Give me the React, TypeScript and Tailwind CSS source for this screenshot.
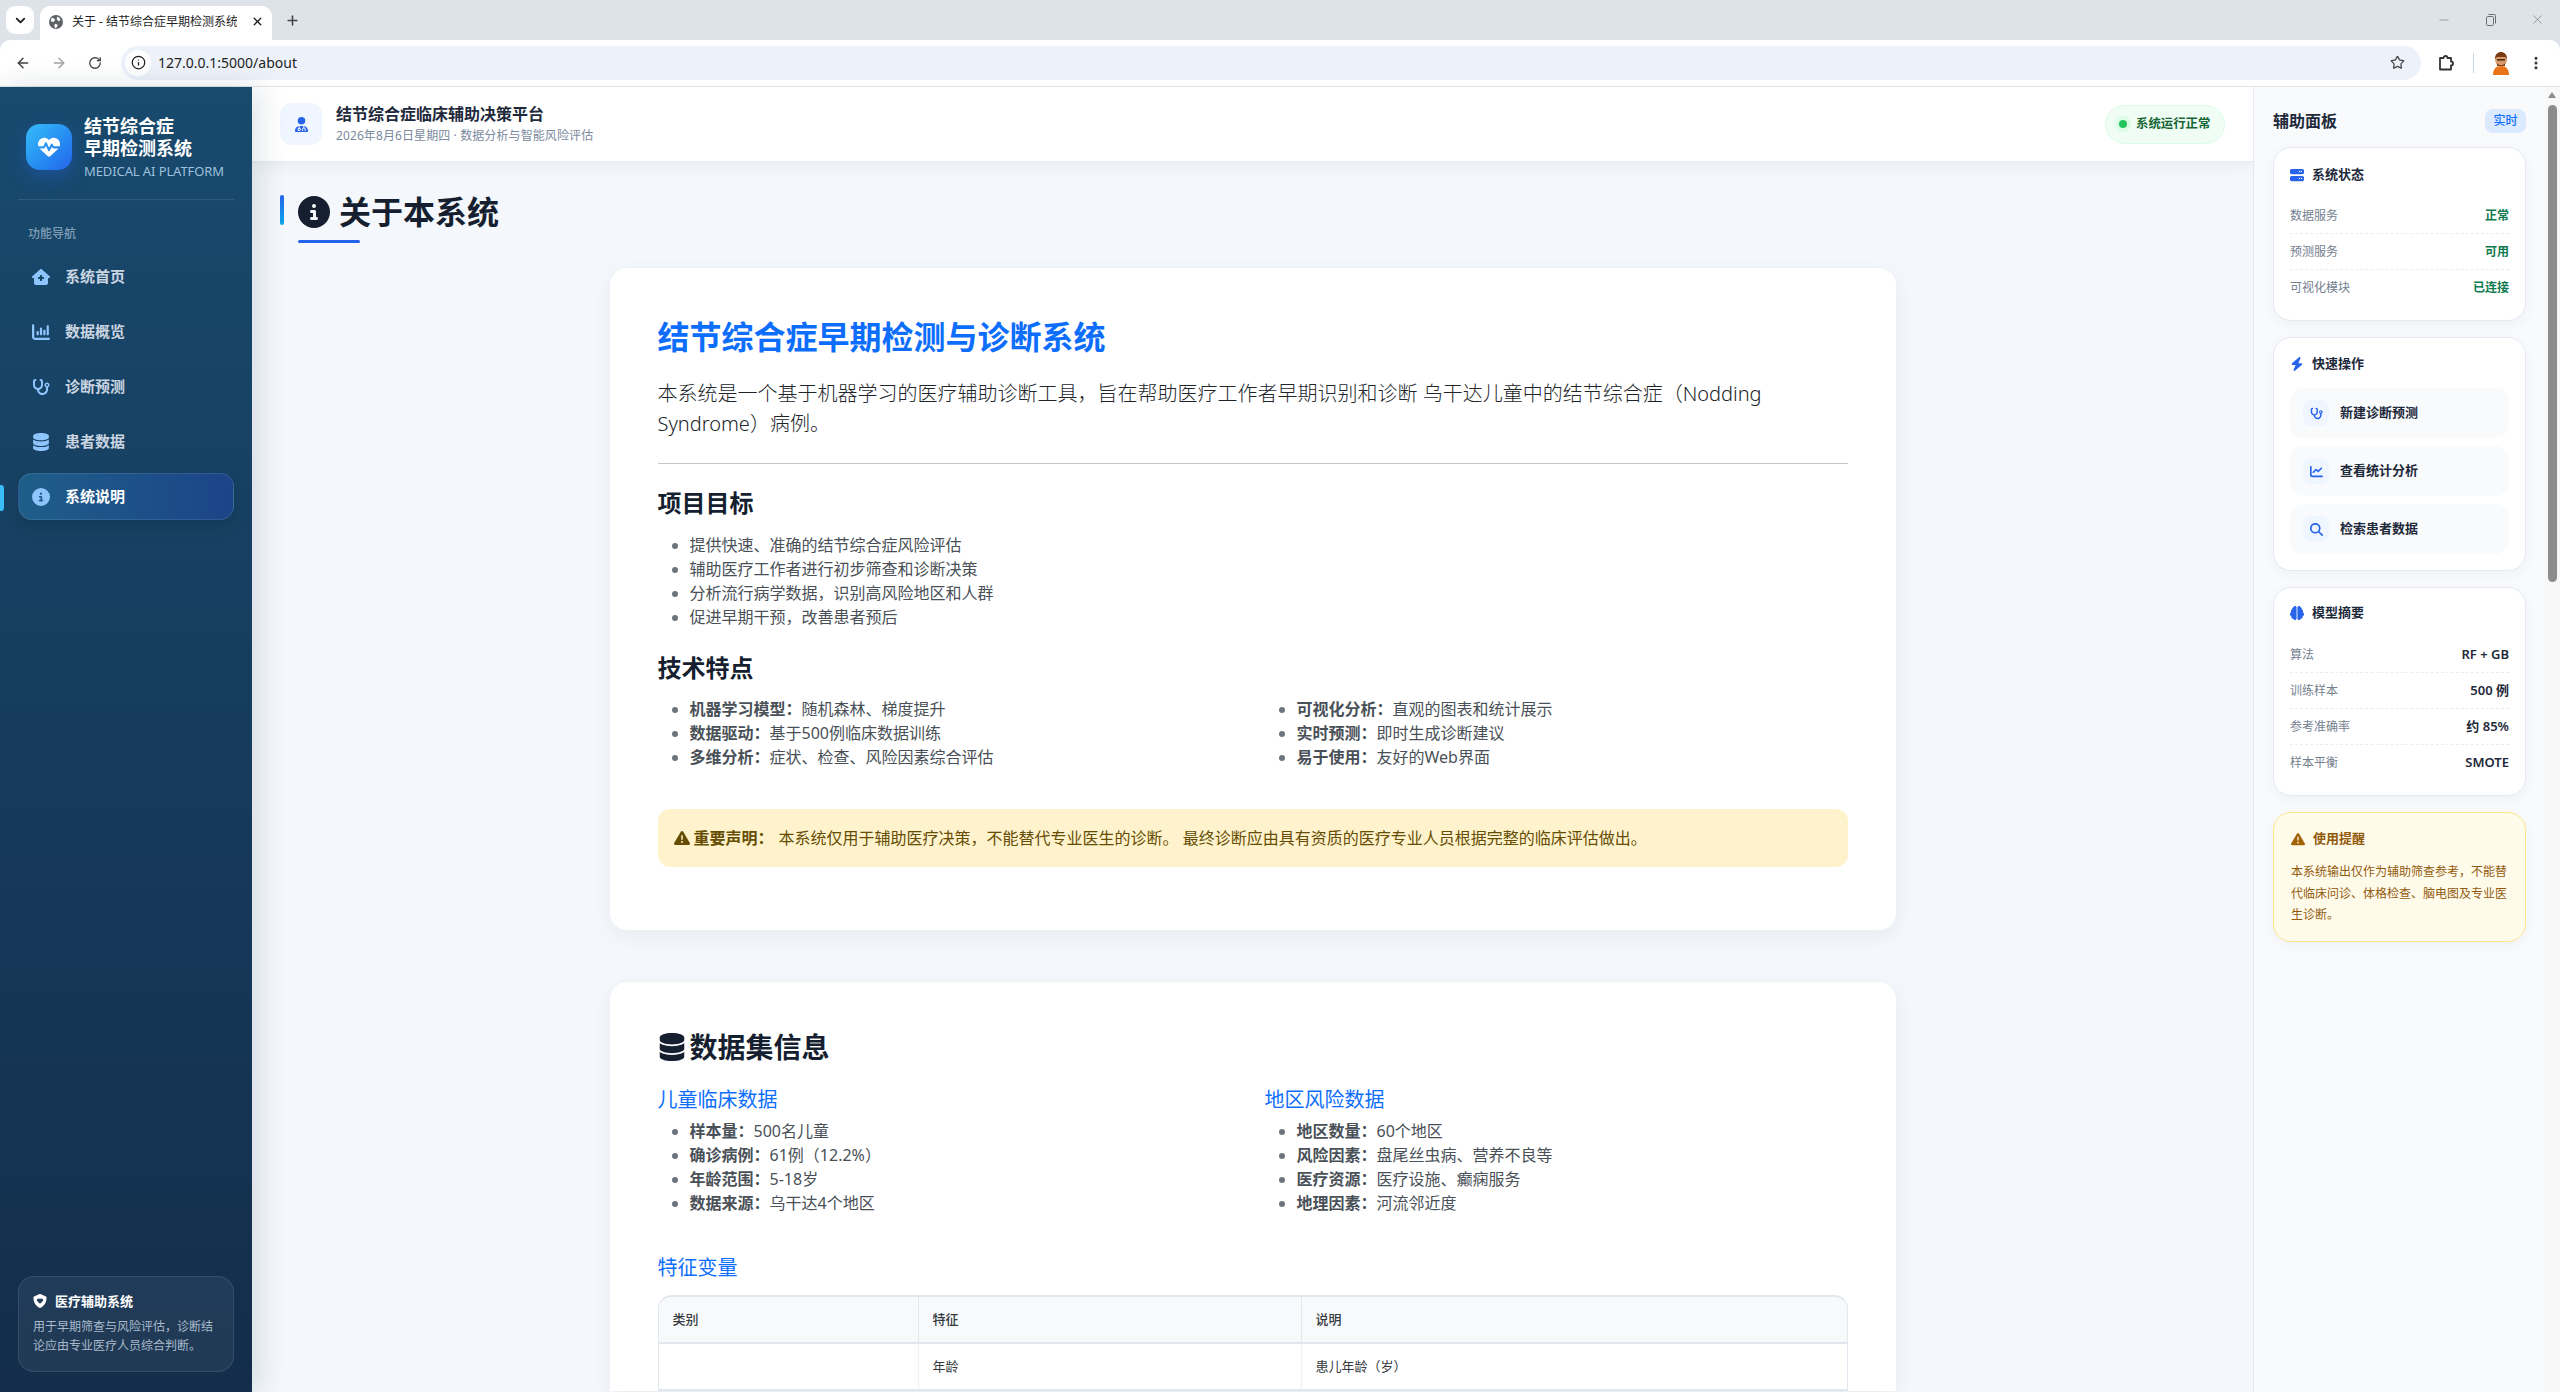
import type { ReactNode } from "react";
import {
  FaBolt,
  FaBrain,
  FaChartColumn,
  FaChartLine,
  FaCircleInfo,
  FaDatabase,
  FaHeartPulse,
  FaHouseMedical,
  FaMagnifyingGlass,
  FaServer,
  FaShieldHeart,
  FaStethoscope,
  FaTriangleExclamation,
  FaUserDoctor,
} from "react-icons/fa6";
import { ArrowLeft, ArrowRight, ChevronDown, EllipsisVertical, Info, Minus, Plus, RotateCw, Star, X } from "lucide-react";

const FONT = "font-['Noto_Sans','Noto_Sans_CJK_SC',sans-serif]";

const navItems = [
  { label: "系统首页", icon: <FaHouseMedical /> },
  { label: "数据概览", icon: <FaChartColumn /> },
  { label: "诊断预测", icon: <FaStethoscope /> },
  { label: "患者数据", icon: <FaDatabase /> },
  { label: "系统说明", icon: <FaCircleInfo />, active: true },
];

function BrowserChrome() {
  return (
    <div className="shrink-0 bg-[#dee3ea]">
      <div className="flex h-[40px] items-end">
        <div className="mb-[6px] ml-[6px] flex h-[28px] w-[28px] items-center justify-center rounded-[9px] bg-white text-[#1f1f1f]">
          <ChevronDown size={15} strokeWidth={3} />
        </div>
        <div className="ml-[6px] flex h-[34px] w-[232px] items-center rounded-t-[10px] bg-white pb-[3px] pl-[9px] pr-[8px]">
          <svg width="14" height="14" viewBox="0 0 16 16" className="shrink-0">
            <circle cx="8" cy="8" r="8" fill="#5f6368" />
            <path d="M3 3l3 1 1 2-2 2-3-1zM9 2l3 1 1 3-2 1-2-2zM7 10l3 1-1 3-2 1-1-3z" fill="#fff" />
          </svg>
          <span className="ml-[9px] w-[165px] overflow-hidden whitespace-nowrap text-[12px] text-[#1f1f1f]">关于 - 结节综合症早期检测系统</span>
          <X size={13} strokeWidth={2.5} className="ml-auto text-[#1f1f1f]" />
        </div>
        <Plus size={15} strokeWidth={2.5} className="mb-[12px] ml-[13px] text-[#444]" />
        <div className="mb-[13px] ml-auto flex items-center gap-[33px] pr-[15px] text-[#6b6f75]">
          <Minus size={14} strokeWidth={1} />
          <svg width="13" height="13" viewBox="0 0 13 13" fill="none" stroke="currentColor">
            <rect x="2.5" y="3.5" width="7" height="9" rx="1" />
            <path d="M4.5 1.5h6a1 1 0 0 1 1 1v8" />
          </svg>
          <X size={15} strokeWidth={1} />
        </div>
      </div>
      <div className="flex h-[47px] items-center rounded-t-[10px] border-b border-[#e3e3e3] bg-white pb-[1px]">
        <ArrowLeft size={16} strokeWidth={2.2} className="ml-[15px] text-[#444]" />
        <ArrowRight size={16} strokeWidth={2.2} className="ml-[20px] text-[#a3a3a3]" />
        <RotateCw size={14} strokeWidth={2.2} className="ml-[21px] text-[#444]" />
        <div className="ml-[19px] flex h-[34px] w-[2300px] items-center rounded-full bg-[#edf2fa] pl-[4px] pr-[16px]">
          <div className="flex h-[26px] w-[26px] items-center justify-center rounded-full bg-white">
            <Info size={15} strokeWidth={2} className="text-[#1f1f1f]" />
          </div>
          <span className="ml-[7px] text-[14px] text-[#1f1f1f]">127.0.0.1:5000/about</span>
          <Star size={15} strokeWidth={2} className="ml-auto text-[#444]" />
        </div>
        <svg width="17" height="17" viewBox="0 0 17 17" fill="none" stroke="#333" strokeWidth="1.8" className="ml-[17px]">
          <path d="M2 4h3.5a2 2 0 0 1 4 0H13v3.5a2 2 0 0 1 0 4V15.5H2z" strokeLinejoin="round" />
        </svg>
        <div className="ml-[18px] h-[20px] w-[1px] bg-[#c7d7f0]" />
        <svg width="18" height="24" viewBox="0 0 18 24" className="ml-[18px]">
          <path d="M1 24c0-6 3-9 8-9s8 3 8 9z" fill="#e8751a" />
          <circle cx="9" cy="9" r="6" fill="#d99a6c" />
          <path d="M3 8c0-5 3-7 6-7s6 2 6 7l-2-2H5z" fill="#7a3b12" />
          <rect x="5" y="8" width="8" height="1.6" fill="#4a2a14" />
          <path d="M5 12c2 3 6 3 8 0v3H5z" fill="#7a3b12" />
        </svg>
        <EllipsisVertical size={16} strokeWidth={2.5} className="ml-[18px] text-[#333]" />
      </div>
    </div>
  );
}

function Sidebar() {
  return (
    <aside className="z-10 flex w-[252px] shrink-0 flex-col justify-between bg-linear-to-b from-[#184a6e] to-[#132d4b] px-[18px] pb-[20px] shadow-[6px_0_28px_rgba(15,40,70,0.14)]">
      <div>
        <div className="flex h-[113px] items-start border-b border-white/10 pl-[8px] pt-[28px]">
          <div className="mt-[9px] flex h-[46px] w-[46px] shrink-0 items-center justify-center rounded-[14px] bg-linear-to-br from-[#38bdf8] to-[#2563eb] text-[22px] text-white shadow-[0_8px_20px_rgba(37,99,235,0.35)]">
            <FaHeartPulse />
          </div>
          <div className="ml-[12px]">
            <div className="text-[18px] font-bold leading-[22px] text-white">结节综合症<br />早期检测系统</div>
            <div className="mt-[2px] text-[13px] leading-[20px] tracking-[-0.1px] text-[#9ec0dc]">MEDICAL AI PLATFORM</div>
          </div>
        </div>
        <div className="mt-[25px] pl-[10px] text-[12px] font-medium leading-[18px] text-[#7f9db5]">功能导航</div>
        <nav className="mt-[10px] flex flex-col gap-[8px]">
          {navItems.map((item) => (
            <div
              key={item.label}
              className={
                item.active
                  ? "relative flex h-[47px] items-center rounded-[14px] border border-white/10 bg-linear-to-r from-[#1f5e89] to-[#1c4488] pl-[13px] text-white shadow-[0_6px_16px_rgba(0,0,0,0.12)]"
                  : "flex h-[47px] items-center rounded-[14px] border border-transparent pl-[13px] text-[#cbd5e1]"
              }
            >
              {item.active && <span className="absolute left-[-19px] top-[11px] h-[26px] w-[4px] rounded-r-[3px] bg-[#38bdf8]" />}
              <span className="flex w-[18px] justify-center text-[18px] text-[#8ec5fc]">{item.icon}</span>
              <span className="ml-[15px] text-[15px] font-semibold">{item.label}</span>
            </div>
          ))}
        </nav>
      </div>
      <div className="h-[96px] rounded-[16px] border border-white/10 bg-white/[0.06] px-[14px] pt-[14px]">
        <div className="flex items-center text-[13px] font-bold leading-[20px] text-white">
          <FaShieldHeart className="text-[14px]" />
          <span className="ml-[8px]">医疗辅助系统</span>
        </div>
        <div className="mt-[6px] text-[12px] leading-[19px] text-[#a9bacb]">用于早期筛查与风险评估，诊断结论应由专业医疗人员综合判断。</div>
      </div>
    </aside>
  );
}

function TopBar() {
  return (
    <header className="flex h-[75px] shrink-0 items-center justify-between border-b border-[#e8ecf2] bg-white pl-[28px] pr-[28px] shadow-[0_4px_16px_rgba(15,40,70,0.05)]">
      <div className="flex items-center">
        <div className="flex h-[42px] w-[42px] items-center justify-center rounded-[12px] bg-[#eff6ff] text-[15px] text-[#2563eb]">
          <FaUserDoctor />
        </div>
        <div className="ml-[14px]">
          <div className="text-[16px] font-semibold leading-[22px] text-[#1e293b]">结节综合症临床辅助决策平台</div>
          <div className="mt-[1px] text-[12px] leading-[20px] tracking-[0.1px] text-[#7b8a9e]">2026年8月6日星期四 · 数据分析与智能风险评估</div>
        </div>
      </div>
      <div className="flex h-[39px] w-[120px] items-center rounded-full border border-[#dcfce7] bg-[#f0fdf4] pl-[9px]">
        <span className="flex h-[16px] w-[16px] items-center justify-center rounded-full bg-[#dcfce7]">
          <span className="h-[8px] w-[8px] rounded-full bg-[#22c55e]" />
        </span>
        <span className="ml-[5px] text-[12.4px] font-semibold text-[#166534]">系统运行正常</span>
      </div>
    </header>
  );
}

function Bullets({ items }: { items: [string, string?][] }) {
  return (
    <ul className="list-disc pl-[32px] text-[16px] leading-[24px] text-[#495057] marker:text-[#6c757d]">
      {items.map(([a, b]) => (
        <li key={a}>
          {b ? (
            <>
              <strong className="font-bold">{a}：</strong>
              {b}
            </>
          ) : (
            a
          )}
        </li>
      ))}
    </ul>
  );
}

function AboutCard() {
  return (
    <section className="rounded-[18px] border border-[#eef1f6] bg-white px-[48px] pb-[63px] pt-[47px] shadow-[0_6px_20px_rgba(15,40,70,0.05)]">
      <h2 className="text-[32px] font-bold leading-[44px] text-[#0d6efd]">结节综合症早期检测与诊断系统</h2>
      <p className="mt-[20px] text-[20px] font-light leading-[30px] text-[#212529]">
        本系统是一个基于机器学习的医疗辅助诊断工具，旨在帮助医疗工作者早期识别和诊断 乌干达儿童中的结节综合症（Nodding Syndrome）病例。
      </p>
      <hr className="mt-[24px] border-t border-[#c6c7c8]" />
      <h3 className="mt-[24px] text-[24px] font-bold leading-[29px] text-[#161f30]">项目目标</h3>
      <div className="mt-[16px]">
        <Bullets items={[["提供快速、准确的结节综合症风险评估"], ["辅助医疗工作者进行初步筛查和诊断决策"], ["分析流行病学数据，识别高风险地区和人群"], ["促进早期干预，改善患者预后"]]} />
      </div>
      <h3 className="mt-[24px] text-[24px] font-bold leading-[29px] text-[#161f30]">技术特点</h3>
      <div className="mt-[15px] grid grid-cols-2 gap-x-[24px]">
        <Bullets items={[["机器学习模型", "随机森林、梯度提升"], ["数据驱动", "基于500例临床数据训练"], ["多维分析", "症状、检查、风险因素综合评估"]]} />
        <Bullets items={[["可视化分析", "直观的图表和统计展示"], ["实时预测", "即时生成诊断建议"], ["易于使用", "友好的Web界面"]]} />
      </div>
      <div className="mt-[40px] flex h-[58px] items-center rounded-[12px] bg-[#fff3cd] pl-[16px] text-[16px] text-[#664d03]">
        <FaTriangleExclamation className="text-[16px]" />
        <strong className="ml-[4px] font-bold">重要声明：</strong>
        <span className="ml-[5px]">本系统仅用于辅助医疗决策，不能替代专业医生的诊断。 最终诊断应由具有资质的医疗专业人员根据完整的临床评估做出。</span>
      </div>
    </section>
  );
}

function DatasetCard() {
  return (
    <section className="mt-[50px] rounded-t-[18px] border border-b-0 border-[#eef1f6] bg-white px-[48px] pt-[47px] shadow-[0_6px_20px_rgba(15,40,70,0.05)]">
      <h2 className="flex items-center text-[28px] font-bold leading-[36px] text-[#161f30]">
        <FaDatabase className="text-[28px]" />
        <span className="ml-[4px]">数据集信息</span>
      </h2>
      <div className="mt-[23px] grid grid-cols-2 gap-x-[24px]">
        <div>
          <h4 className="mb-[7px] text-[20px] leading-[24px] text-[#0d6efd]">儿童临床数据</h4>
          <Bullets items={[["样本量", "500名儿童"], ["确诊病例", "61例（12.2%）"], ["年龄范围", "5-18岁"], ["数据来源", "乌干达4个地区"]]} />
        </div>
        <div>
          <h4 className="mb-[7px] text-[20px] leading-[24px] text-[#0d6efd]">地区风险数据</h4>
          <Bullets items={[["地区数量", "60个地区"], ["风险因素", "盘尾丝虫病、营养不良等"], ["医疗资源", "医疗设施、癫痫服务"], ["地理因素", "河流邻近度"]]} />
        </div>
      </div>
      <h4 className="mt-[41px] text-[20px] leading-[24px] text-[#0d6efd]">特征变量</h4>
      <div className="mt-[15px] overflow-hidden rounded-t-[14px] border-x border-t-2 border-[#e2e6ee] text-[13px] text-[#343a40]">
        <div className="grid h-[47px] grid-cols-[260px_383px_1fr] items-center border-b-2 border-[#e2e6ee] bg-[#f8f9fb] font-medium">
          <div className="flex h-full items-center border-r border-[#e2e6ee] pl-[14px]">类别</div>
          <div className="flex h-full items-center border-r border-[#e2e6ee] pl-[14px]">特征</div>
          <div className="pl-[14px]">说明</div>
        </div>
        <div className="grid h-[47px] grid-cols-[260px_383px_1fr] items-center border-b-2 border-[#e2e6ee]">
          <div className="h-full border-r border-[#eef1f6]" />
          <div className="flex h-full items-center border-r border-[#eef1f6] pl-[14px]">年龄</div>
          <div className="pl-[14px]">患儿年龄（岁）</div>
        </div>
      </div>
    </section>
  );
}

function PanelCard({ children, className }: { children: ReactNode; className: string }) {
  return <div className={`mb-[16px] rounded-[18px] border border-[#e5eaf2] bg-white px-[16px] shadow-[0_4px_14px_rgba(15,40,70,0.04)] ${className}`}>{children}</div>;
}

function CardTitle({ icon, text }: { icon: ReactNode; text: string }) {
  return (
    <div className="flex h-[20px] items-center text-[13px] font-bold text-[#1e293b]">
      <span className="flex w-[14px] justify-center text-[14px] text-[#2563eb]">{icon}</span>
      <span className="ml-[8px]">{text}</span>
    </div>
  );
}

function KV({ k, v, last, tone }: { k: string; v: string; last?: boolean; tone: string }) {
  return (
    <div className={`flex h-[36px] items-center justify-between text-[12px] ${last ? "" : "border-b border-dashed border-[#e8edf3]"}`}>
      <span className="text-[#74808f]">{k}</span>
      <span className={`font-semibold ${tone}`}>{v}</span>
    </div>
  );
}

const quickActions = [
  { label: "新建诊断预测", icon: <FaStethoscope /> },
  { label: "查看统计分析", icon: <FaChartLine /> },
  { label: "检索患者数据", icon: <FaMagnifyingGlass /> },
];

function RightPanel() {
  return (
    <aside className="w-[292px] shrink-0 border-l border-[#e5eaf2] bg-[#f8fafc] pl-[19px] pr-[19px] pt-[22px]">
      <div className="mb-[14px] flex h-[24px] items-center justify-between">
        <span className="text-[16px] font-semibold text-[#1e293b]">辅助面板</span>
        <span className="flex h-[24px] w-[41px] items-center justify-center rounded-[8px] bg-[#dbeafe] text-[12px] font-medium text-[#0d6efd]">实时</span>
      </div>
      <PanelCard className="h-[174px] pt-[17px]">
        <CardTitle icon={<FaServer />} text="系统状态" />
        <div className="mt-[13px]">
          <KV k="数据服务" v="正常" tone="text-[#0f7a4f]" />
          <KV k="预测服务" v="可用" tone="text-[#0f7a4f]" />
          <KV k="可视化模块" v="已连接" tone="text-[#0f7a4f]" last />
        </div>
      </PanelCard>
      <PanelCard className="h-[234px] pt-[16px]">
        <CardTitle icon={<FaBolt />} text="快速操作" />
        <div className="mt-[14px] flex flex-col gap-[8px]">
          {quickActions.map((a) => (
            <div key={a.label} className="flex h-[50px] items-center rounded-[14px] bg-[#f8fafc] pl-[13px]">
              <span className="flex h-[26px] w-[26px] items-center justify-center rounded-[8px] bg-[#eff6ff] text-[13px] text-[#2563eb]">{a.icon}</span>
              <span className="ml-[11px] text-[13px] font-semibold text-[#1e293b]">{a.label}</span>
            </div>
          ))}
        </div>
      </PanelCard>
      <PanelCard className="h-[209px] pt-[15px]">
        <CardTitle icon={<FaBrain />} text="模型摘要" />
        <div className="mt-[14px]">
          <KV k="算法" v="RF + GB" tone="text-[13px] text-[#1e293b] font-bold" />
          <KV k="训练样本" v="500 例" tone="text-[13px] text-[#1e293b] font-bold" />
          <KV k="参考准确率" v="约 85%" tone="text-[13px] text-[#1e293b] font-bold" />
          <KV k="样本平衡" v="SMOTE" tone="text-[13px] text-[#1e293b] font-bold" last />
        </div>
      </PanelCard>
      <div className="h-[130px] rounded-[18px] border border-[#fde68a] bg-[#fffbeb] px-[17px] pt-[16px] shadow-[0_4px_14px_rgba(15,40,70,0.04)]">
        <div className="flex h-[20px] items-center text-[13px] font-bold text-[#925a0b]">
          <FaTriangleExclamation className="text-[14px] text-[#a16207]" />
          <span className="ml-[8px]">使用提醒</span>
        </div>
        <p className="mt-[12px] text-[12px] leading-[21.6px] text-[#925a0b]">本系统输出仅作为辅助筛查参考，不能替代临床问诊、体格检查、脑电图及专业医生诊断。</p>
      </div>
    </aside>
  );
}

function ScrollBar() {
  return (
    <div className="relative w-[15px] shrink-0 bg-[#f8f8f8]">
      <div className="absolute left-[3px] top-[5px] h-0 w-0 border-x-[4.5px] border-b-[6px] border-x-transparent border-b-[#8c8c8c]" />
      <div className="absolute left-[3px] top-[18px] h-[477px] w-[9px] rounded-full bg-[#8c8c8c]" />
    </div>
  );
}

export default function App() {
  return (
    <div className={`flex h-[1392px] w-[2560px] flex-col overflow-hidden bg-white ${FONT}`}>
      <BrowserChrome />
      <div className="flex min-h-0 flex-1">
        <Sidebar />
        <main className="flex min-w-0 flex-1 flex-col overflow-hidden bg-[#f4f7fb]">
          <TopBar />
          <div className="flex-1 overflow-hidden px-[28px] pt-[34px]">
            <div className="relative flex h-[32px] items-center pl-[18px]">
              <span className="absolute left-[0px] top-[-1px] h-[30px] w-[4px] rounded-full bg-linear-to-b from-[#2563eb] to-[#0ea5e9]" />
              <FaCircleInfo className="text-[32px] text-[#161f30]" />
              <h1 className="ml-[9px] text-[32px] font-bold leading-[32px] text-[#161f30]">关于本系统</h1>
            </div>
            <div className="ml-[18px] mt-[12px] h-[3px] w-[62px] rounded-full bg-[#2563eb]" />
            <div className="mx-auto mt-[24px] w-[1288px]">
              <AboutCard />
              <DatasetCard />
            </div>
          </div>
        </main>
        <RightPanel />
        <ScrollBar />
      </div>
    </div>
  );
}
